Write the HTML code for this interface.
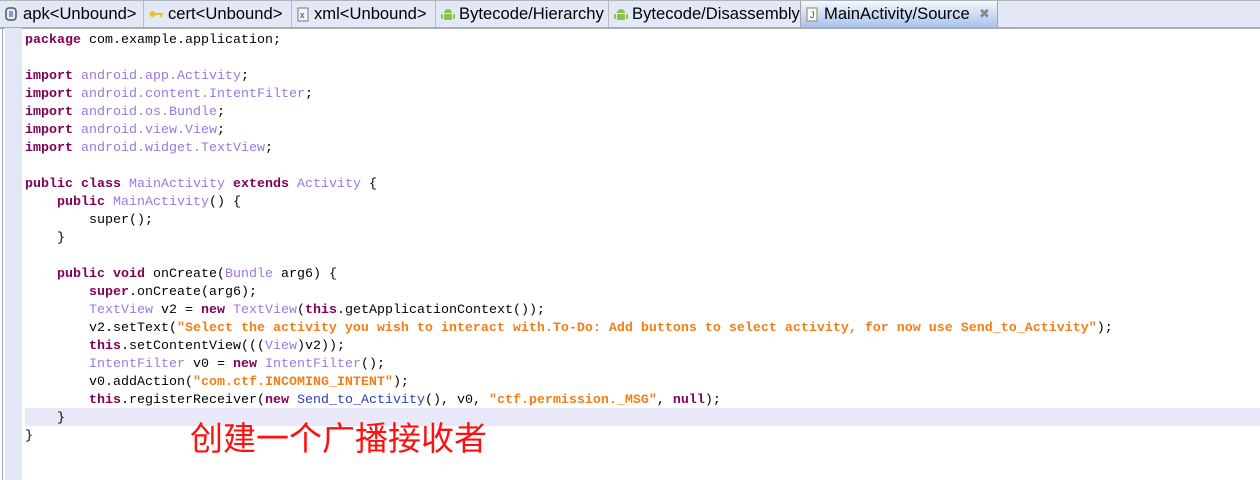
<html><head><style>
body{margin:0;width:1260px;height:480px;background:#fff;overflow:hidden;position:relative;font-family:"Liberation Sans",sans-serif}
.tabs{position:absolute;left:0;top:0;width:1260px;height:26px;background:#e2e8f5;border-bottom:2px solid #a8acb4;border-top:1px solid #b0b4bc}
.tab{position:absolute;top:0;height:26px;font-size:16.6px;line-height:26px;color:#000;border-right:1px solid #b8bcc4;white-space:nowrap}
.tab.act{background:linear-gradient(#f4f7fd,#a9c3ee);height:26px;border-left:1px solid #a0a4ac;border-right:1px solid #a0a4ac}
.ico{position:absolute;top:6px}
.gut{position:absolute;left:2px;top:28px;width:1px;height:452px;background:#9aa8c8}
.gut2{position:absolute;left:5px;top:28px;width:17px;height:452px;background:#e2e8f5}
.hl{position:absolute;left:25px;top:408px;width:1235px;height:18px;background:#e8e8f8}
pre{position:absolute;left:25px;top:32px;margin:0;font-family:"Liberation Mono",monospace;font-size:13.33px;line-height:18px;color:#000}
.k{color:#7f0055;font-weight:bold}.t{color:#9a78e0}.s{color:#f07f1a;font-weight:bold}.b{color:#2a3ec0}
.cn{position:absolute;left:190px;top:416px;font-family:"Noto Sans CJK SC",sans-serif;font-size:33px;color:#ff1010;line-height:40px}
</style></head><body>
<div class="tabs">
<div class="tab" style="left:0;width:143px"><svg class="ico" style="left:5px" width="13" height="15"><rect x="1" y="1" width="10" height="12" rx="3" fill="none" stroke="#555" stroke-width="1.5"/><rect x="4" y="4" width="4" height="6" fill="#7aa0d0"/></svg><span style="position:absolute;left:23px">apk&lt;Unbound&gt;</span></div>
<div class="tab" style="left:144px;width:147px"><svg class="ico" style="left:5px;top:9px" width="15" height="8"><circle cx="3.5" cy="4" r="3" fill="#e8c030"/><rect x="6" y="3" width="8" height="2" fill="#e8c030"/><rect x="11" y="5" width="2" height="2" fill="#e8c030"/></svg><span style="position:absolute;left:24px">cert&lt;Unbound&gt;</span></div>
<div class="tab" style="left:292px;width:143px"><svg class="ico" style="left:5px" width="12" height="15"><rect x="1" y="1" width="10" height="13" fill="#f4f4f4" stroke="#777"/><text x="3" y="11" font-size="9" fill="#333" font-family="Liberation Sans">x</text></svg><span style="position:absolute;left:22px">xml&lt;Unbound&gt;</span></div>
<div class="tab" style="left:436px;width:172px"><svg class="ico" style="left:5px" width="14" height="15"><path d="M3 6a4 4 0 0 1 8 0z" fill="#8bc34a"/><rect x="3" y="7" width="8" height="6" rx="1" fill="#8bc34a"/><rect x="0" y="7" width="2" height="5" rx="1" fill="#8bc34a"/><rect x="12" y="7" width="2" height="5" rx="1" fill="#8bc34a"/></svg><span style="position:absolute;left:23px">Bytecode/Hierarchy</span></div>
<div class="tab" style="left:609px;width:191px"><svg class="ico" style="left:5px" width="14" height="15"><path d="M3 6a4 4 0 0 1 8 0z" fill="#8bc34a"/><rect x="3" y="7" width="8" height="6" rx="1" fill="#8bc34a"/><rect x="0" y="7" width="2" height="5" rx="1" fill="#8bc34a"/><rect x="12" y="7" width="2" height="5" rx="1" fill="#8bc34a"/></svg><span style="position:absolute;left:23px">Bytecode/Disassembly</span></div>
<div class="tab act" style="left:800px;width:196px"><svg class="ico" style="left:5px" width="12" height="15"><rect x="1" y="1" width="10" height="13" fill="#fafafa" stroke="#a08050"/><text x="4" y="11" font-size="9" fill="#2050a0" font-family="Liberation Sans">J</text></svg><span style="position:absolute;left:23px">MainActivity/Source</span><span style="position:absolute;left:178px;font-size:13px;color:#888">✖</span></div>
</div>
<div class="gut"></div><div class="gut2"></div><div class="hl"></div>
<pre><span class="k">package</span> com.example.application;

<span class="k">import</span> <span class="t">android.app.Activity</span>;
<span class="k">import</span> <span class="t">android.content.IntentFilter</span>;
<span class="k">import</span> <span class="t">android.os.Bundle</span>;
<span class="k">import</span> <span class="t">android.view.View</span>;
<span class="k">import</span> <span class="t">android.widget.TextView</span>;

<span class="k">public class</span> <span class="t">MainActivity</span> <span class="k">extends</span> <span class="t">Activity</span> {
    <span class="k">public</span> <span class="t">MainActivity</span>() {
        super();
    }

    <span class="k">public void</span> onCreate(<span class="t">Bundle</span> arg6) {
        <span class="k">super</span>.onCreate(arg6);
        <span class="t">TextView</span> v2 = <span class="k">new</span> <span class="t">TextView</span>(<span class="k">this</span>.getApplicationContext());
        v2.setText(<span class="s">"Select the activity you wish to interact with.To-Do: Add buttons to select activity, for now use Send_to_Activity"</span>);
        <span class="k">this</span>.setContentView(((<span class="t">View</span>)v2));
        <span class="t">IntentFilter</span> v0 = <span class="k">new</span> <span class="t">IntentFilter</span>();
        v0.addAction(<span class="s">"com.ctf.INCOMING_INTENT"</span>);
        <span class="k">this</span>.registerReceiver(<span class="k">new</span> <span class="b">Send_to_Activity</span>(), v0, <span class="s">"ctf.permission._MSG"</span>, <span class="k">null</span>);
    }
}</pre>
<div class="cn">创建一个广播接收者</div>
</body></html>
